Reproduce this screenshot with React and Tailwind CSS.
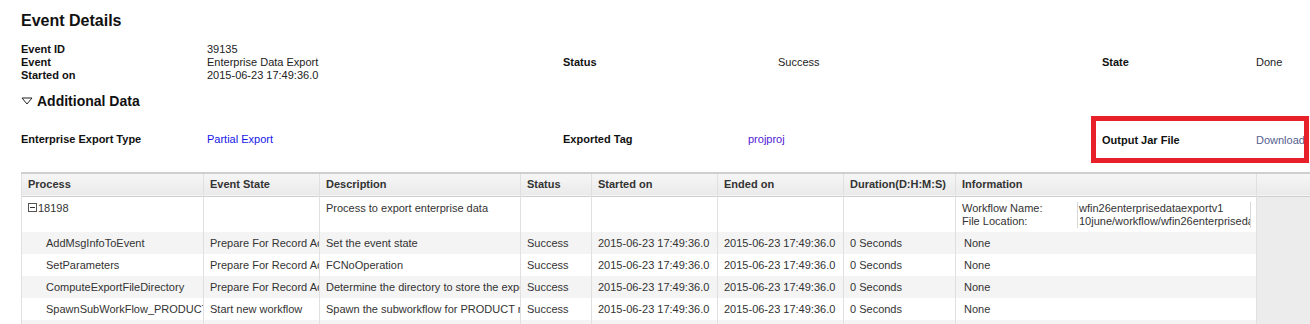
import React from 'react';

const rows = [
  { name: 'AddMsgInfoToEvent', state: 'Prepare For Record Actions', desc: 'Set the event state' },
  { name: 'SetParameters', state: 'Prepare For Record Actions', desc: 'FCNoOperation' },
  { name: 'ComputeExportFileDirectory', state: 'Prepare For Record Actions', desc: 'Determine the directory to store the export file' },
  { name: 'SpawnSubWorkFlow_PRODUCT', state: 'Start new workflow', desc: 'Spawn the subworkflow for PRODUCT records' },
  { name: 'SpawnSubWorkFlow_DOCUMENT', state: 'Start new workflow', desc: 'Spawn the subworkflow for DOCUMENT records' },
];

const headers = ['Process', 'Event State', 'Description', 'Status', 'Started on', 'Ended on', 'Duration(D:H:M:S)', 'Information', ''];
const widths = ['182px', '116px', '201px', '71px', '126px', '126px', '112px', '301px', '54px'];

const cell = 'border-l border-[#e0e0e0] px-[6px] whitespace-nowrap overflow-hidden align-middle';

const Toggle = () => (
  <svg width="9" height="9" viewBox="0 0 9 9" className="inline-block mr-[1px] -mt-[2px] align-middle">
    <rect x="0.5" y="0.5" width="8" height="8" fill="#fff" stroke="#555" />
    <line x1="2" y1="4.5" x2="7" y2="4.5" stroke="#333" />
  </svg>
);

const App = () => {
  return (
    <div className="w-[1310px] h-[324px] overflow-hidden bg-white text-[#222] text-[11px] leading-[13px]" style={{ fontFamily: '"Liberation Sans", Arial, sans-serif' }}>
      <h1 className="ml-[21px] mt-[11px] text-[16px] leading-[20px] font-bold text-[#111]">Event Details</h1>

      <div className="ml-[21px] mt-[12px] flex items-center">
        <div className="w-[186px] font-bold text-[#111]">
          <div>Event ID</div>
          <div>Event</div>
          <div>Started on</div>
        </div>
        <div className="w-[356px]">
          <div>39135</div>
          <div>Enterprise Data Export</div>
          <div>2015-06-23 17:49:36.0</div>
        </div>
        <div className="w-[215px] font-bold text-[#111]">Status</div>
        <div className="w-[324px]">Success</div>
        <div className="w-[154px] font-bold text-[#111]">State</div>
        <div>Done</div>
      </div>

      <div className="ml-[21px] mt-[10px] flex items-center h-[18px] text-[14px] leading-[18px] font-bold text-[#111]">
        <svg width="12" height="8" viewBox="0 0 12 8" className="mr-[4px]">
          <path d="M1 1 L11 1 L6 7 Z" fill="none" stroke="#222" strokeWidth="1" />
        </svg>
        Additional Data
      </div>

      <div className="ml-[21px] mt-[6px] flex items-center">
        <div className="w-[186px] font-bold text-[#111]">Enterprise Export Type</div>
        <div className="w-[356px] text-[#1515e8]">Partial Export</div>
        <div className="w-[185px] font-bold text-[#111]">Exported Tag</div>
        <div className="w-[343px] text-[#5020d4]">projproj</div>
        <div className="w-[218px] h-[47px] border-[5px] border-[#e8202a] pl-[6px] pt-[1px] flex items-center overflow-hidden whitespace-nowrap">
          <div className="w-[154px] shrink-0 font-bold text-[#111]">Output Jar File</div>
          <div className="text-[#55608f]">Download</div>
        </div>
      </div>

      <div className="ml-[21px] mt-[9px] border-t-2 border-[#cfcfcf]">
        <table className="table-fixed border-collapse w-[1289px] text-[#333]">
          <colgroup>
            {widths.map((w, i) => (
              <col key={i} style={{ width: w }} />
            ))}
          </colgroup>
          <thead>
            <tr className="h-[22px] bg-gradient-to-b from-[#f6f6f6] to-[#eaeaea] border-b border-[#cfcfcf]">
              {headers.map((h, i) => (
                <th key={i} className={`${cell} text-left font-bold ${i === 0 ? 'border-[#cfcfcf]' : ''}`}>{h}</th>
              ))}
            </tr>
          </thead>
          <tbody>
            <tr className="h-[36px] bg-white">
              <td className={`${cell} border-[#cfcfcf] align-top pt-[5px]`}><Toggle />18198</td>
              <td className={`${cell} align-top pt-[5px]`}></td>
              <td className={`${cell} align-top pt-[5px]`}>Process to export enterprise data</td>
              <td className={`${cell} align-top pt-[5px]`}></td>
              <td className={`${cell} align-top pt-[5px]`}></td>
              <td className={`${cell} align-top pt-[5px]`}></td>
              <td className={`${cell} align-top pt-[5px]`}></td>
              <td className={`${cell} align-top pt-[5px] pr-[0px]`}>
                <div className="flex">
                  <div className="w-[115px] shrink-0">
                    <div>Workflow Name:</div>
                    <div>File Location:</div>
                  </div>
                  <div className="w-[174px] shrink-0 border-l border-r border-[#d8d8d8] overflow-hidden pl-[1px]">
                    <div>wfin26enterprisedataexportv1</div>
                    <div>10june/workflow/wfin26enterprisedataexport</div>
                  </div>
                </div>
              </td>
              <td className={`${cell} bg-[#ececec]`}></td>
            </tr>
            {rows.map((r, i) => (
              <tr key={r.name} className={`h-[22px] ${i % 2 === 0 ? 'bg-[#f4f4f4]' : 'bg-white'}`}>
                <td className={`${cell} border-[#cfcfcf] pl-[24px] pt-[1px]`}>{r.name}</td>
                <td className={`${cell} pt-[1px]`}>{r.state}</td>
                <td className={`${cell} pt-[1px]`}>{r.desc}</td>
                <td className={`${cell} pt-[1px]`}>Success</td>
                <td className={`${cell} pt-[1px]`}>2015-06-23 17:49:36.0</td>
                <td className={`${cell} pt-[1px]`}>2015-06-23 17:49:36.0</td>
                <td className={`${cell} pt-[1px]`}>0 Seconds</td>
                <td className={`${cell} pl-[8px] pt-[1px]`}>None</td>
                <td className={`${cell} bg-[#ececec]`}></td>
              </tr>
            ))}
          </tbody>
        </table>
      </div>
    </div>
  );
};

export default App;
